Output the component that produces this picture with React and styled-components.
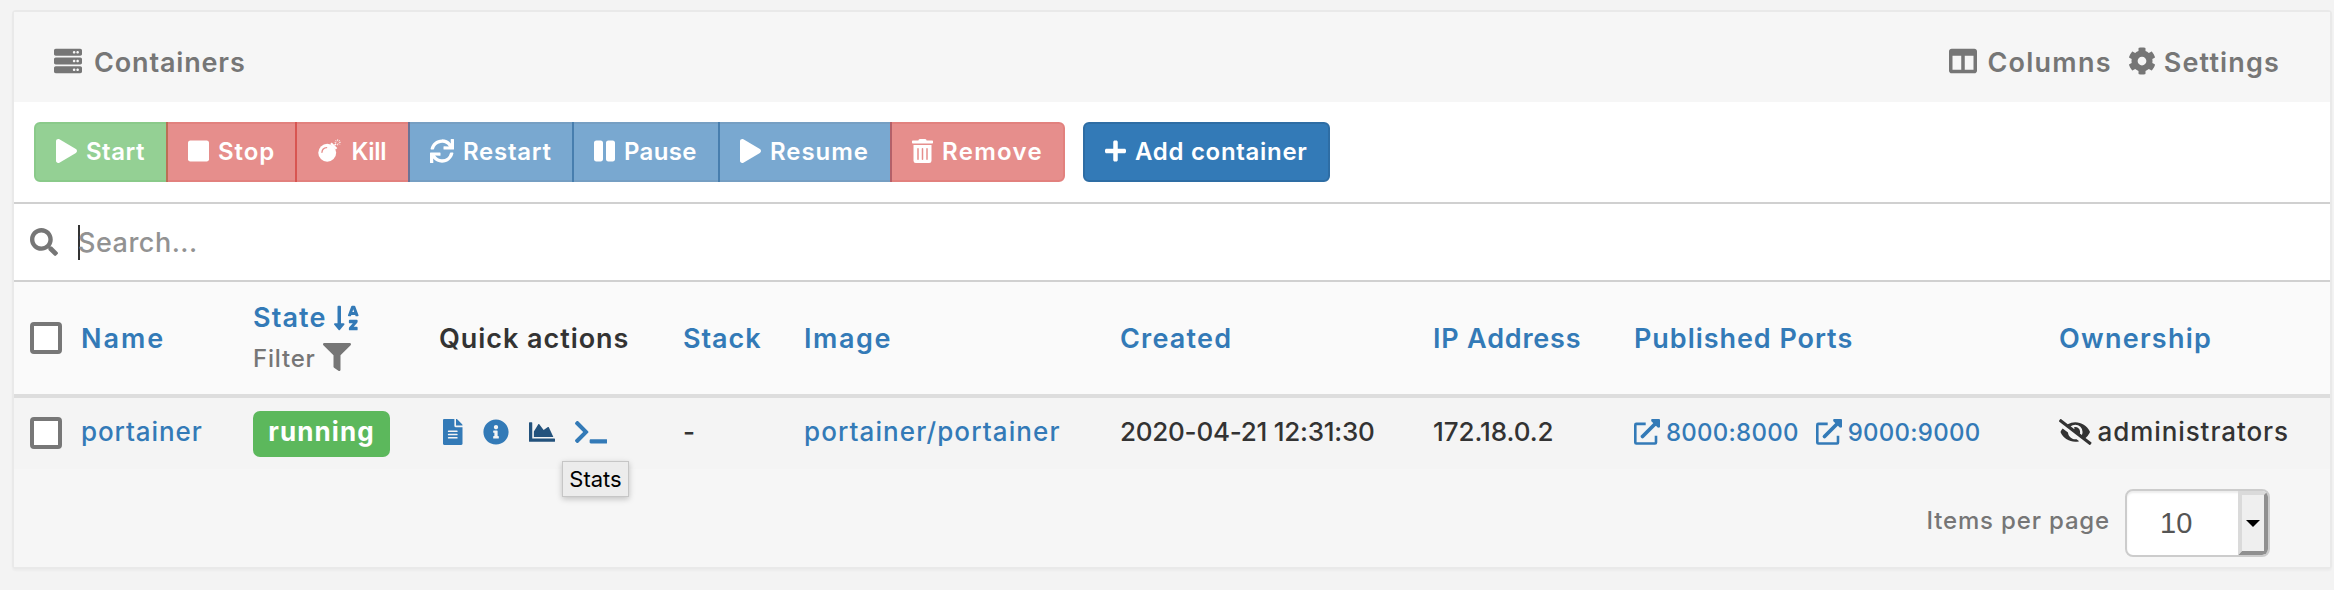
import React from "react";
import styled, { createGlobalStyle, css } from "styled-components";
import {
  FaServer, FaColumns, FaCog, FaPlay, FaStop, FaSync, FaPause, FaTrashAlt, FaPlus,
  FaSearch, FaSortAlphaDown, FaFilter, FaFileAlt, FaInfoCircle, FaChartArea,
  FaTerminal, FaEyeSlash,
} from "react-icons/fa";

const GlobalStyle = createGlobalStyle`
  * { box-sizing: border-box; }
  body {
    margin: 0;
    background: #f3f3f3;
    color: #333;
    font-family: Inter, "Liberation Sans", sans-serif;
    font-weight: 500;
  }
  svg { display: block; flex: none; }
`;

const Page = styled.main`
  height: 590px;
  padding: 10px 2px 0 12px;
`;

const Panel = styled.section`
  height: 559px;
  border: 2px solid #e9e9e9;
  border-radius: 4px;
  background: #fff;
  box-shadow: 0 2px 2px rgba(0, 0, 0, 0.03);
`;

const Label = styled.span`
  white-space: nowrap;
  letter-spacing: ${(p) => p.$track || 0}px;
`;

/* $ratio is the glyph's own width relative to its height */
const Glyph = styled.span`
  display: block;
  flex: none;
  svg { width: ${(p) => p.$ratio || 1}em; height: 1em; }
`;

const PanelHeader = styled.header`
  display: flex;
  justify-content: space-between;
  height: 90px;
  padding: 10px 50px 0 40px;
  background: #f6f6f6;
  color: #767676;
  font-size: 27px;
  font-weight: 600;
`;

const HeaderItem = styled.div`
  display: flex;
  align-items: center;
  gap: ${(p) => p.$gap}px;
  svg { font-size: 28px; margin-top: -2px; }
`;

const HeaderMenu = styled.nav`
  display: flex;
  gap: 16px;
`;

const ActionBar = styled.div`
  display: flex;
  gap: 18px;
  height: 102px;
  padding: 20px;
  border-bottom: 2px solid #d0d0d0;
`;

const ButtonGroup = styled.div`
  display: flex;
  button { border-radius: 0; }
  button + button { margin-left: -2px; }
  button:first-child { border-radius: 6px 0 0 6px; }
  button:last-child { border-radius: 0 6px 6px 0; }
`;

const tones = {
  success: css`background: #5cb85c; border-color: #4cae4c;`,
  danger: css`background: #d9534f; border-color: #d43f3a;`,
  primary: css`background: #337ab7; border-color: #2e6da4;`,
};

const Button = styled.button`
  display: flex;
  align-items: center;
  gap: 9px;
  width: ${(p) => p.$width}px;
  height: 60px;
  padding: 0 0 2px 20px;
  border: 2px solid;
  border-radius: 6px;
  color: #fff;
  font: 600 24px Inter, "Liberation Sans", sans-serif;
  ${(p) => tones[p.$tone]}
  &:disabled { opacity: 0.65; }
`;

const SearchBar = styled.div`
  display: flex;
  align-items: center;
  height: 78px;
  padding-left: 16px;
  border-bottom: 2px solid #d0d0d0;
  color: #767676;
  font-size: 28px;
`;

const Caret = styled.i`
  width: 2px;
  height: 35px;
  margin-left: 20px;
  background: #333;
`;

const Placeholder = styled(Label)`
  margin-left: -2px;
  color: #929292;
  font-size: 27px;
`;

const rowGrid = css`
  display: grid;
  grid-template-columns: 67px 172px 186px 244px 121px 316px 313px 201px 425px 1fr;
  align-items: center;
`;

const HeadRow = styled.div`
  ${rowGrid}
  height: 116px;
  border-bottom: 4px solid #ddd;
  background: #fafafa;
  color: #337ab7;
  font-size: 27px;
  font-weight: 600;
`;

const BodyRow = styled.div`
  ${rowGrid}
  height: 71px;
  background: #f4f4f4;
  font-size: 26px;
`;

const Cell = styled.div`
  display: flex;
  align-items: center;
  padding-bottom: ${(p) => p.$lift || 0}px;
  color: ${(p) => (p.$tone === "link" ? "#337ab7" : p.$tone === "dark" ? "#333" : "inherit")};
`;

const Checkbox = styled.span`
  width: 32px;
  height: 32px;
  margin-left: 16px;
  border: 4px solid #777;
  border-radius: 4px;
  background: #fff;
`;

const StateHead = styled.div`
  display: flex;
  flex-direction: column;
  gap: 8px;
`;

const SortLine = styled.div`
  display: flex;
  align-items: center;
  gap: 8px;
  height: 33px;
  svg { font-size: 28px; }
`;

const FilterLine = styled(SortLine)`
  gap: 7px;
  color: #767676;
  font-size: 24px;
  font-weight: 500;
  svg { margin-top: -4px; }
`;

const Badge = styled.span`
  display: flex;
  align-items: center;
  justify-content: center;
  width: 137px;
  height: 46px;
  padding-bottom: 5px;
  border-radius: 7px;
  background: #5cb85c;
  color: #fff;
  font-weight: 700;
`;

const QuickActions = styled.div`
  position: relative;
  display: flex;
  gap: 20px;
  padding: 0 0 3px 4px;
  color: #337ab7;
`;

const ActiveAction = styled(Glyph)`
  color: #23527c;
`;

const Tooltip = styled.div`
  position: absolute;
  top: 42px;
  left: 123px;
  width: 67px;
  height: 36px;
  border: 1px solid #c6c6c6;
  background: #ececec;
  box-shadow: 0 2px 6px rgba(0, 0, 0, 0.22);
  color: #000;
  font-size: 22px;
  font-weight: 400;
  line-height: 34px;
  text-align: center;
`;

const Port = styled.a`
  display: flex;
  align-items: center;
  gap: 6px;
  margin-right: 17px;
  font-size: 24px;
  svg { width: 26px; height: 26px; }
`;

const Owner = styled.div`
  display: flex;
  align-items: center;
  gap: 6px;
`;

const Footer = styled.footer`
  display: flex;
  align-items: flex-start;
  justify-content: flex-end;
  height: 98px;
  padding: 20px 60px 0 0;
  background: #f6f6f6;
`;

const PageSizeLabel = styled(Label)`
  margin-right: 15px;
  color: #767676;
  font-size: 24px;
  line-height: 63px;
`;

const Select = styled.div`
  display: flex;
  width: 145px;
  height: 68px;
  border: 2px solid #ccc;
  border-radius: 8px;
  background: #fff;
  box-shadow: inset 0 2px 2px rgba(0, 0, 0, 0.075);
  overflow: hidden;
`;

const SelectValue = styled.span`
  width: 111px;
  padding-left: 33px;
  color: #555;
  font: 400 29px/65px "Liberation Sans", sans-serif;
`;

const SelectButton = styled.span`
  display: flex;
  align-items: center;
  justify-content: center;
  width: 30px;
  border: 4px solid;
  border-color: #dadada #909090 #909090 #dadada;
  border-radius: 0 5px 5px 0;
  background: #efefef;
  &::after {
    content: "";
    border: 7px solid transparent;
    border-top-color: #000;
    border-bottom-width: 0;
  }
`;

function BombIcon() {
  return (
    <svg viewBox="0 0 26 26" fill="currentColor">
      <circle cx="10.3" cy="14.9" r="9.7" />
      <path d="M13.6 5.4l1.6-1.6 6 6-1.6 1.6z" />
      <path d="M18.2 6.8l1.7-1.7" stroke="currentColor" strokeWidth="1.6" />
      <path d="M4.6 14.4a5.5 5.5 0 0 1 5-5" fill="none" stroke="#d9534f" strokeWidth="1.5" strokeLinecap="round" />
      <path
        d="M21.6.3v1.9M21.6 5v1.9M18.3 3.6h1.9M23 3.6h1.9M19.3 1.3l1.2 1.2M22.8 4.8L24 6M24 1.3l-1.2 1.2"
        fill="none" stroke="currentColor" strokeWidth=".9"
      />
    </svg>
  );
}

function ExternalIcon() {
  return (
    <svg viewBox="0 0 26 26" fill="none" stroke="currentColor">
      <path d="M11.7 4.9H2.3a1 1 0 0 0-1 1v17.6a1 1 0 0 0 1 1h18.7a1 1 0 0 0 1-1v-6.7" strokeWidth="2.6" />
      <path d="M8.5 17.5L21 5" strokeWidth="3.8" strokeLinecap="round" />
      <path d="M17.5 0H25a1 1 0 0 1 1 1v7.3l-2 .4-6.9-6.8z" fill="currentColor" stroke="none" />
    </svg>
  );
}

const groupActions = [
  { label: "Start", icon: <FaPlay />, ratio: 0.875, tone: "success", width: 134, track: 0.5 },
  { label: "Stop", icon: <FaStop />, ratio: 0.875, tone: "danger", width: 131, track: 0.9 },
  { label: "Kill", icon: <BombIcon />, ratio: 1.06, tone: "danger", width: 115, track: -0.3 },
  { label: "Restart", icon: <FaSync />, ratio: 1, tone: "primary", width: 166, track: 0.75 },
  { label: "Pause", icon: <FaPause />, ratio: 0.875, tone: "primary", width: 148, track: 0.3 },
  { label: "Resume", icon: <FaPlay />, ratio: 0.875, tone: "primary", width: 174, track: 0.95 },
  { label: "Remove", icon: <FaTrashAlt />, ratio: 0.875, tone: "danger", width: 175, track: 1.3 },
];

export default function App() {
  return (
    <>
      <GlobalStyle />
      <Page>
        <Panel>
          <PanelHeader>
            <HeaderItem $gap={12}>
              <Glyph><FaServer /></Glyph>
              <Label $track={0.85}>Containers</Label>
            </HeaderItem>
            <HeaderMenu>
              <HeaderItem $gap={10}>
                <Glyph><FaColumns /></Glyph>
                <Label $track={1.25}>Columns</Label>
              </HeaderItem>
              <HeaderItem $gap={8}>
                <Glyph><FaCog /></Glyph>
                <Label $track={1.15}>Settings</Label>
              </HeaderItem>
            </HeaderMenu>
          </PanelHeader>

          <ActionBar>
            <ButtonGroup>
              {groupActions.map((a) => (
                <Button key={a.label} $tone={a.tone} $width={a.width} disabled>
                  <Glyph $ratio={a.ratio}>{a.icon}</Glyph>
                  <Label $track={a.track}>{a.label}</Label>
                </Button>
              ))}
            </ButtonGroup>
            <Button $tone="primary" $width={247}>
              <Glyph $ratio={0.875}><FaPlus /></Glyph>
              <Label $track={0.7}>Add container</Label>
            </Button>
          </ActionBar>

          <SearchBar>
            <Glyph><FaSearch /></Glyph>
            <Caret />
            <Placeholder $track={0.5}>Search...</Placeholder>
          </SearchBar>

          <HeadRow>
            <Cell><Checkbox /></Cell>
            <Cell><Label $track={2}>Name</Label></Cell>
            <Cell>
              <StateHead>
                <SortLine>
                  <Label $track={1.1}>State</Label>
                  <Glyph $ratio={0.875}><FaSortAlphaDown /></Glyph>
                </SortLine>
                <FilterLine>
                  <Label $track={0.8}>Filter</Label>
                  <Glyph><FaFilter /></Glyph>
                </FilterLine>
              </StateHead>
            </Cell>
            <Cell $tone="dark"><Label $track={0.95}>Quick actions</Label></Cell>
            <Cell><Label $track={0.95}>Stack</Label></Cell>
            <Cell><Label $track={1.6}>Image</Label></Cell>
            <Cell><Label $track={1.2}>Created</Label></Cell>
            <Cell><Label $track={0.8}>IP Address</Label></Cell>
            <Cell><Label $track={0.95}>Published Ports</Label></Cell>
            <Cell><Label $track={1.25}>Ownership</Label></Cell>
          </HeadRow>

          <BodyRow>
            <Cell $lift={2}><Checkbox /></Cell>
            <Cell $tone="link" $lift={4}><Label $track={0.9}>portainer</Label></Cell>
            <Cell><Badge><Label $track={1.1}>running</Label></Badge></Cell>
            <Cell>
              <QuickActions>
                <Glyph $ratio={0.75}><FaFileAlt /></Glyph>
                <Glyph><FaInfoCircle /></Glyph>
                <ActiveAction><FaChartArea /></ActiveAction>
                <Glyph $ratio={1.25}><FaTerminal /></Glyph>
                <Tooltip>Stats</Tooltip>
              </QuickActions>
            </Cell>
            <Cell $lift={4}><Label>-</Label></Cell>
            <Cell $tone="link" $lift={4}><Label $track={1.09}>portainer/portainer</Label></Cell>
            <Cell $lift={4}><Label $track={-0.25}>2020-04-21 12:31:30</Label></Cell>
            <Cell $lift={4}><Label $track={-0.05}>172.18.0.2</Label></Cell>
            <Cell $tone="link" $lift={3}>
              <Port><ExternalIcon /><Label $track={0.25}>8000:8000</Label></Port>
              <Port><ExternalIcon /><Label $track={0.25}>9000:9000</Label></Port>
            </Cell>
            <Cell $lift={4}>
              <Owner>
                <Glyph $ratio={1.25}><FaEyeSlash /></Glyph>
                <Label $track={0.92}>administrators</Label>
              </Owner>
            </Cell>
          </BodyRow>

          <Footer>
            <PageSizeLabel $track={0.83}>Items per page</PageSizeLabel>
            <Select>
              <SelectValue>10</SelectValue>
              <SelectButton />
            </Select>
          </Footer>
        </Panel>
      </Page>
    </>
  );
}
